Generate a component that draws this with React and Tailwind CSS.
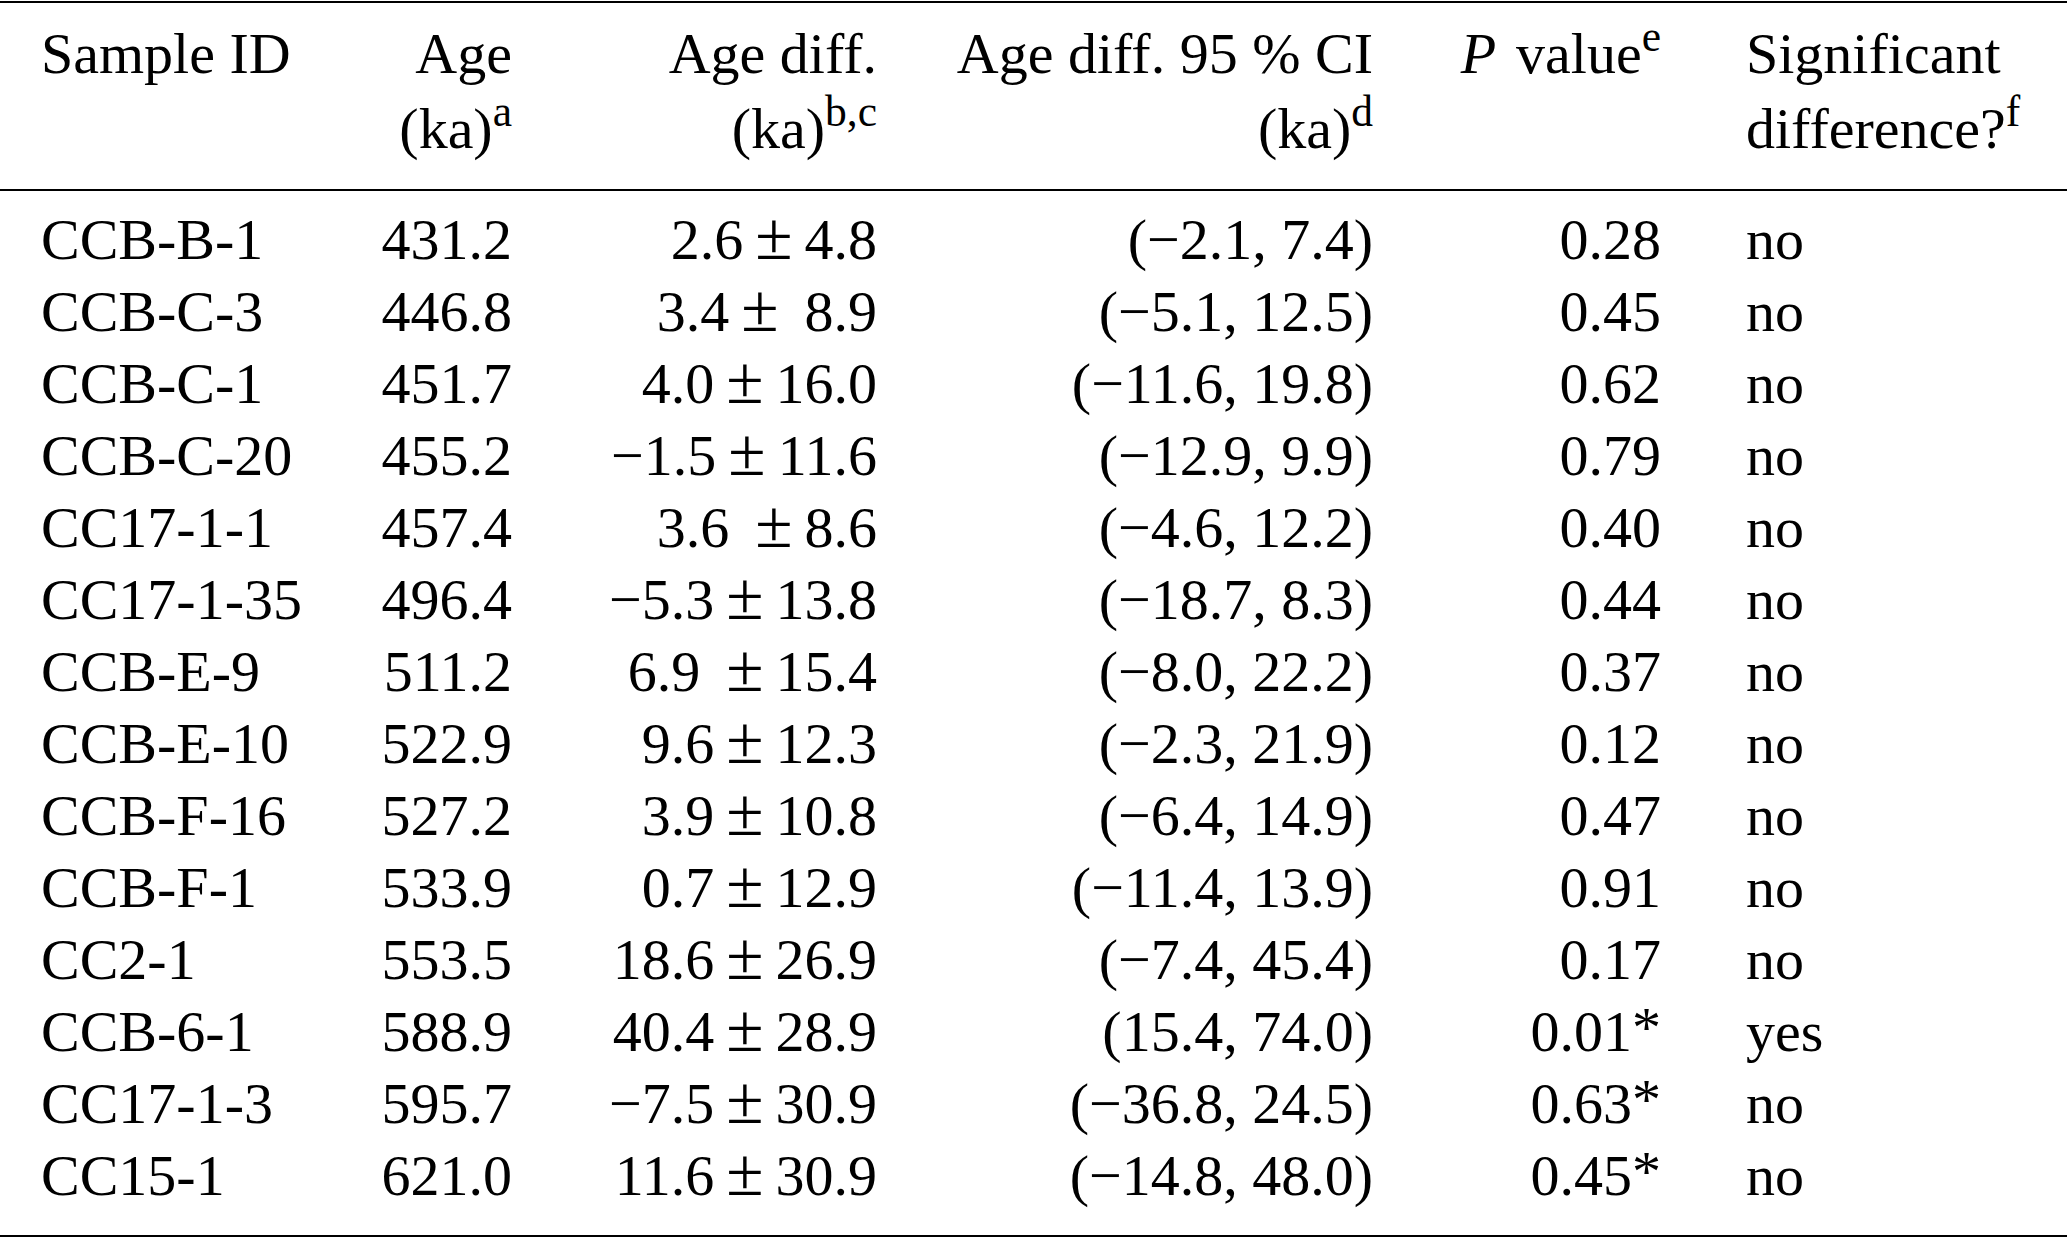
import React from 'react';

// a / b: the two halves of "a ± b"; gapA / gapB add the extra space seen in some rows
const ROWS = [
  { id: 'CCB-B-1', age: '431.2', a: '2.6', b: '4.8', ci: '(−2.1, 7.4)', p: '0.28', sig: 'no' },
  { id: 'CCB-C-3', age: '446.8', a: '3.4', b: '8.9', gapB: true, ci: '(−5.1, 12.5)', p: '0.45', sig: 'no' },
  { id: 'CCB-C-1', age: '451.7', a: '4.0', b: '16.0', ci: '(−11.6, 19.8)', p: '0.62', sig: 'no' },
  { id: 'CCB-C-20', age: '455.2', a: '−1.5', b: '11.6', ci: '(−12.9, 9.9)', p: '0.79', sig: 'no' },
  { id: 'CC17-1-1', age: '457.4', a: '3.6', b: '8.6', gapA: true, ci: '(−4.6, 12.2)', p: '0.40', sig: 'no' },
  { id: 'CC17-1-35', age: '496.4', a: '−5.3', b: '13.8', ci: '(−18.7, 8.3)', p: '0.44', sig: 'no' },
  { id: 'CCB-E-9', age: '511.2', a: '6.9', b: '15.4', gapA: true, ci: '(−8.0, 22.2)', p: '0.37', sig: 'no' },
  { id: 'CCB-E-10', age: '522.9', a: '9.6', b: '12.3', ci: '(−2.3, 21.9)', p: '0.12', sig: 'no' },
  { id: 'CCB-F-16', age: '527.2', a: '3.9', b: '10.8', ci: '(−6.4, 14.9)', p: '0.47', sig: 'no' },
  { id: 'CCB-F-1', age: '533.9', a: '0.7', b: '12.9', ci: '(−11.4, 13.9)', p: '0.91', sig: 'no' },
  { id: 'CC2-1', age: '553.5', a: '18.6', b: '26.9', ci: '(−7.4, 45.4)', p: '0.17', sig: 'no' },
  { id: 'CCB-6-1', age: '588.9', a: '40.4', b: '28.9', ci: '(15.4, 74.0)', p: '0.01', star: true, sig: 'yes' },
  { id: 'CC17-1-3', age: '595.7', a: '−7.5', b: '30.9', ci: '(−36.8, 24.5)', p: '0.63', star: true, sig: 'no' },
  { id: 'CC15-1', age: '621.0', a: '11.6', b: '30.9', ci: '(−14.8, 48.0)', p: '0.45', star: true, sig: 'no' },
];

const COLS = 'grid grid-cols-[380px_132px_365px_496px_288px_1fr]';

function Row({ row }) {
  return (
    <div className={`${COLS} h-[72px] leading-[72px] whitespace-nowrap`}>
      <div className="pl-[41px]">{row.id}</div>
      <div className="text-right">{row.age}</div>
      <div className="text-right">
        {row.a}
        <span className={`text-[68px] leading-[0] ${row.gapA ? 'ml-[26px] mr-[12px]' : 'mx-[12px]'}`}>±</span>
        <span className={row.gapB ? 'ml-[14px]' : ''}>{row.b}</span>
      </div>
      <div className="text-right">{row.ci}</div>
      <div className="text-right">
        {row.p}
        {row.star && <span className="relative -top-[4px] text-[58px] leading-[0]">*</span>}
      </div>
      <div className="pl-[85px]">{row.sig}</div>
    </div>
  );
}

export default function App() {
  return (
    <div className="w-[2067px] bg-white pt-px text-black text-[58px] font-['Liberation_Serif','Times_New_Roman',serif]">
      <div className={`${COLS} leading-[75px] whitespace-nowrap border-y-2 border-black pt-[13px] pb-[23px]`}>
        <div className="pl-[41px]">Sample ID</div>
        <div className="text-right">
          <div>Age</div>
          <div>(ka)<sup>a</sup></div>
        </div>
        <div className="text-right">
          <div>Age diff.</div>
          <div>(ka)<sup>b,c</sup></div>
        </div>
        <div className="text-right">
          <div>Age diff. 95 % CI</div>
          <div>(ka)<sup>d</sup></div>
        </div>
        <div className="text-right">
          <i className="mr-[20px]">P</i>value<sup>e</sup>
        </div>
        <div className="pl-[85px]">
          <div>Significant</div>
          <div>difference?<sup>f</sup></div>
        </div>
      </div>
      <div className="border-b-2 border-black pt-[13px] pb-[23px]">
        {ROWS.map((row) => (
          <Row key={row.id} row={row} />
        ))}
      </div>
    </div>
  );
}
